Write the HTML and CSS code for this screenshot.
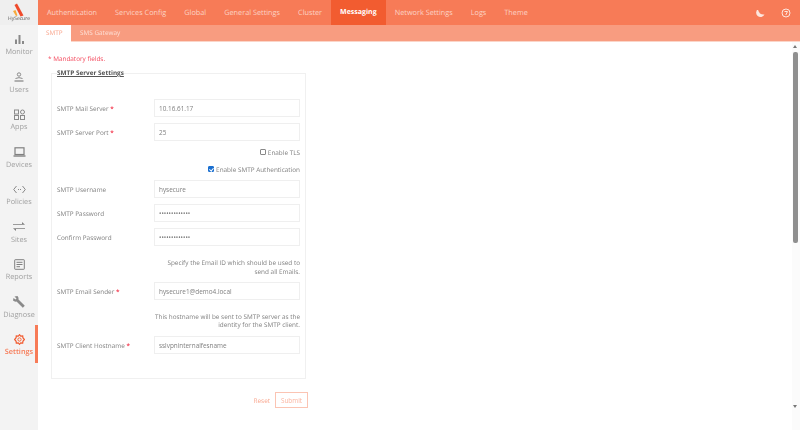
FILE: index.html
```html
<!DOCTYPE html>
<html lang="en">
<head>
    <meta charset="UTF-8">
    <title>HySecure</title>
    <link rel="stylesheet" href="styles.css">
</head>
<body>
    <aside class="sidebar">
        <div class="logo">
            <svg width="14" height="14" viewBox="0 0 14 14"><path d="M2.500 2 L5 0.500 L11.500 12.500 L8.500 13.500 Z" fill="#ef4a2b"/><path d="M1 8 L3.500 7 L5.500 12.500 L4 13 Z" fill="#f6a93b"/></svg>
            <span>HySecure</span>
        </div>
        <a class="side-item">
            <span class="side-icon"><svg width="9" height="9" viewBox="0 0 9 9"><path d="M0 4.500h2v4.500h-2zM3.500 0h2v9h-2zM7 6h2v3h-2z" fill="#8a8a8a"/></svg></span>
            Monitor
        </a>
        <a class="side-item">
            <span class="side-icon"><svg width="10" height="10" viewBox="0 0 10 10" fill="none" stroke="#8a8a8a"><circle cx="5" cy="2.500" r="1.700"/><path d="M1.500 6.500 Q5 4.800 8.500 6.500" /><path d="M.5 9h9" stroke-width="1.300"/></svg></span>
            Users
        </a>
        <a class="side-item">
            <span class="side-icon"><svg width="11" height="11" viewBox="0 0 11 11" fill="none" stroke="#8a8a8a"><rect x=".5" y="1" width="4" height="4"/><circle cx="8.500" cy="3" r="2"/><rect x=".5" y="6.500" width="4" height="4"/><rect x="6.500" y="6.500" width="4" height="4"/></svg></span>
            Apps
        </a>
        <a class="side-item">
            <span class="side-icon"><svg width="13" height="10" viewBox="0 0 13 10" fill="none" stroke="#808080"><rect x="2" y=".8" width="9" height="6.700" stroke-width="1.200"/><path d="M.5 9h12" stroke-width="1.400"/></svg></span>
            Devices
        </a>
        <a class="side-item">
            <span class="side-icon"><svg width="13" height="9" viewBox="0 0 13 9" fill="none" stroke="#8a8a8a"><path d="M3.500 1 L.7 4.500 L3.500 8M9.500 1 L12.300 4.500 L9.500 8"/><path d="M5 4.500h3" stroke-dasharray="1 1"/></svg></span>
            Policies
        </a>
        <a class="side-item">
            <span class="side-icon"><svg width="12" height="10" viewBox="0 0 12 10"><path d="M0 2h9V0l3 2.700H0zM12 7H3v2L0 6.300h12z" fill="#808080"/></svg></span>
            Sites
        </a>
        <a class="side-item">
            <span class="side-icon"><svg width="11" height="11" viewBox="0 0 11 11" fill="none" stroke="#808080"><rect x=".7" y=".7" width="9.600" height="9.600" rx=".5"/><path d="M2.500 3.300h6M2.500 5.500h6M2.500 7.700h3.500"/></svg></span>
            Reports
        </a>
        <a class="side-item">
            <span class="side-icon"><svg width="12" height="12" viewBox="0 0 12 12"><path d="M1.500 .5 L4.500 0 Q6 1.500 5.500 3.500 L11.800 9.800 L9.800 11.800 L3.500 5.500 Q1.500 6 0 4.500 L.5 2 L2.500 3.500 L3.500 2.500 Z" fill="#8a8a8a"/></svg></span>
            Diagnose
        </a>
        <a class="side-item active">
            <span class="side-icon"><svg width="11" height="11" viewBox="0 0 12 12" fill="none" stroke="#f25c30"><path d="M6 .8 L7.300 2.300 L9.500 2 L9.700 4.100 L11.300 6 L9.700 7.900 L9.500 10 L7.300 9.700 L6 11.200 L4.700 9.700 L2.500 10 L2.300 7.900 L.7 6 L2.300 4.100 L2.500 2 L4.700 2.300 Z" stroke-width="1.300"/><circle cx="6" cy="6" r="1.800"/></svg></span>
            Settings
        </a>
    </aside>

    <div class="main">
        <nav class="topbar">
            <a class="tab">Authentication</a>
            <a class="tab">Services Config</a>
            <a class="tab">Global</a>
            <a class="tab">General Settings</a>
            <a class="tab">Cluster</a>
            <a class="tab active">Messaging</a>
            <a class="tab">Network Settings</a>
            <a class="tab">Logs</a>
            <a class="tab">Theme</a>
            <div class="top-icons">
                <svg width="10" height="10" viewBox="0 0 10 10"><path d="M3 1 A4.400 4.400 0 1 0 9.500 6.500 A6 6 0 0 1 5 5.500 A6 6 0 0 1 3 1 Z" fill="#fde6de"/></svg>
                <svg width="10" height="10" viewBox="0 0 10 10" fill="none" stroke="#fde6de"><circle cx="5" cy="5" r="4"/><path d="M3.500 3.500 H6.500 L4.800 7"/></svg>
            </div>
        </nav>
        <nav class="subbar">
            <a class="subtab active">SMTP</a>
            <a class="subtab">SMS Gateway</a>
        </nav>

        <div class="content">
            <p class="mandatory">* Mandatory fields.</p>
            <form class="settings-form">
                <fieldset class="box">
                    <legend>SMTP Server Settings</legend>
                    <div class="row first">
                        <label>SMTP Mail Server <b>*</b></label>
                        <input type="text" value="10.16.61.17">
                    </div>
                    <div class="row">
                        <label>SMTP Server Port <b>*</b></label>
                        <input type="text" value="25">
                    </div>
                    <label class="check tls"><input type="checkbox"> Enable TLS</label>
                    <label class="check auth"><input type="checkbox" checked> Enable SMTP Authentication</label>
                    <div class="row">
                        <label>SMTP Username</label>
                        <input type="text" value="hysecure">
                    </div>
                    <div class="row">
                        <label>SMTP Password</label>
                        <input type="password" value="hysecure12345">
                    </div>
                    <div class="row">
                        <label>Confirm Password</label>
                        <input type="password" value="hysecure12345">
                    </div>
                    <p class="help email-help">Specify the Email ID which should be used to send all Emails.</p>
                    <div class="row">
                        <label>SMTP Email Sender <b>*</b></label>
                        <input type="text" value="hysecure1@demo4.local">
                    </div>
                    <p class="help host-help">This hostname will be sent to SMTP server as the identity for the SMTP client.</p>
                    <div class="row">
                        <label>SMTP Client Hostname <b>*</b></label>
                        <input type="text" value="sslvpninternalfesname">
                    </div>
                </fieldset>
                <div class="actions">
                    <a class="reset">Reset</a>
                    <button type="button" class="submit">Submit</button>
                </div>
            </form>
        </div>

        <div class="scrollbar">
            <span class="arrow up"></span>
            <span class="thumb"></span>
            <span class="arrow down"></span>
        </div>
    </div>
</body>
</html>
```

FILE: styles.css
```css
*{
    box-sizing: border-box;
}
html, body{
    height: 100%;
}
body{
    margin: 0;
    display: flex;
    overflow: hidden;
    font-family: "Open Sans", "Noto Sans", sans-serif;
    font-size: 6.4px;
    text-rendering: geometricPrecision;
    color: #808080;
    background: #fff;
}
/* the whole shot is a bit soft */
.sidebar, .main{
    filter: blur(.3px);
}
.sidebar{
    width: 38px;
    flex: none;
    background: #f3f3f3;
}
.logo{
    height: 25px;
    background: #efefef;
    display: flex;
    flex-direction: column;
    align-items: center;
    padding-top: 3px;
    font-size: 5px;
    line-height: 5px;
    color: #555;
}
.side-item{
    position: relative;
    height: 37.5px;
    display: flex;
    flex-direction: column;
    align-items: center;
    padding-top: 8px;
    gap: 2px;
    font-size: 7.3px;
    line-height: 10px;
    color: #a0a0a0;
}
.side-icon{
    height: 12px;
    display: flex;
    align-items: center;
}
.side-item.active{
    color: #f77b57;
    font-weight: 600;
}
.side-item.active::after{
    content: '';
    position: absolute;
    right: 0;
    top: 0;
    width: 3px;
    height: 38px;
    background: #f77b57;
}
.main{
    position: relative;
    flex: 1;
    min-width: 0;
}
.topbar{
    height: 25px;
    background: #f77b57;
    display: flex;
}
.tab{
    padding: 0 9px;
    line-height: 26px;
    font-size: 7.3px;
    color: #fcd3c5;
}
.tab.active{
    background: #f25c30;
    color: #fff;
    font-size: 7px;
    font-weight: 700;
}
.top-icons{
    margin-left: auto;
    display: flex;
    align-items: center;
    gap: 16px;
    padding-right: 9px;
}
.subbar{
    height: 17px;
    background: #f89c80;
    border-bottom: 1px solid #fbd5c8;
    display: flex;
}
.subtab{
    padding: 0 9px;
    line-height: 16px;
    font-size: 6.4px;
    color: #fde0d6;
}
.subtab.active{
    width: 33px;
    padding: 0 0 0 8px;
    height: 17px;
    background: #fff;
    color: #f9a68e;
}
.content{
    padding: 12px 0 0 10px;
}
.mandatory{
    margin: 0;
    line-height: 10px;
    color: #f4485c;
}
.settings-form{
    width: 260px;
}
.box{
    width: 255px;
    height: 310px;
    margin: 5px 0 0 3px;
    padding: 0 5px;
    border: 1px solid #f0f0f0;
}
.box legend{
    padding: 0;
    font-size: 6.4px;
    line-height: 8px;
    font-weight: 700;
    color: #555;
    text-decoration: underline;
}
.row{
    display: flex;
    align-items: center;
    justify-content: space-between;
    height: 18px;
    margin-bottom: 6px;
}
.row.first{
    margin-top: 22px;
}
.row label b{
    color: #f4485c;
}
.row input{
    width: 146px;
    height: 18px;
    padding: 0 4px;
    border: 1px solid #efefef;
    font-family: inherit;
    font-size: 6.4px;
    color: #808080;
    outline: none;
}
.check{
    display: flex;
    justify-content: flex-end;
    align-items: center;
    gap: 2px;
    height: 10px;
}
.check input{
    appearance: none;
    position: relative;
    margin: 0;
    width: 6px;
    height: 6px;
    border: 1px solid #888;
    border-radius: 1px;
    background: #fff;
}
.check input:checked{
    border-color: #1a6fd0;
    background: #1a6fd0;
}
.check input:checked::after{
    content: '';
    position: absolute;
    left: 1px;
    top: 0;
    width: 1.5px;
    height: 3px;
    border: solid #fff;
    border-width: 0 1px 1px 0;
    transform: rotate(40deg);
}
.check.tls{
    margin-top: 6px;
}
.check.auth{
    margin-top: 7px;
    margin-bottom: 6px;
}
.help{
    margin: 0 0 0 auto;
    width: 146px;
    text-align: right;
    line-height: 8.5px;
}
.email-help{
    margin-top: 13px;
    margin-bottom: 6px;
}
.host-help{
    margin-top: 12.5px;
    margin-bottom: 6.5px;
}
.actions{
    display: flex;
    justify-content: flex-end;
    align-items: center;
    gap: 5px;
    margin-top: 13px;
}
.reset{
    color: #f9a68e;
}
.submit{
    width: 33px;
    height: 16px;
    padding: 0;
    border: 1px solid #fbc4b3;
    background: #fff;
    font-family: inherit;
    font-size: 6.4px;
    color: #fbb49f;
}
/* fake scrollbar over the page */
.scrollbar{
    position: absolute;
    top: 42px;
    right: 0;
    bottom: 0;
    width: 8px;
    background: #fbfbfb;
}
.thumb{
    position: absolute;
    top: 10px;
    left: 1px;
    width: 5px;
    height: 191px;
    border-radius: 2px;
    background: #8f8f8f;
}
.arrow{
    position: absolute;
    left: 1px;
    border-left: 2.5px solid transparent;
    border-right: 2.5px solid transparent;
}
.arrow.up{
    top: 3px;
    border-bottom: 3px solid #777;
}
.arrow.down{
    bottom: 22px;
    border-top: 3px solid #777;
}
```
